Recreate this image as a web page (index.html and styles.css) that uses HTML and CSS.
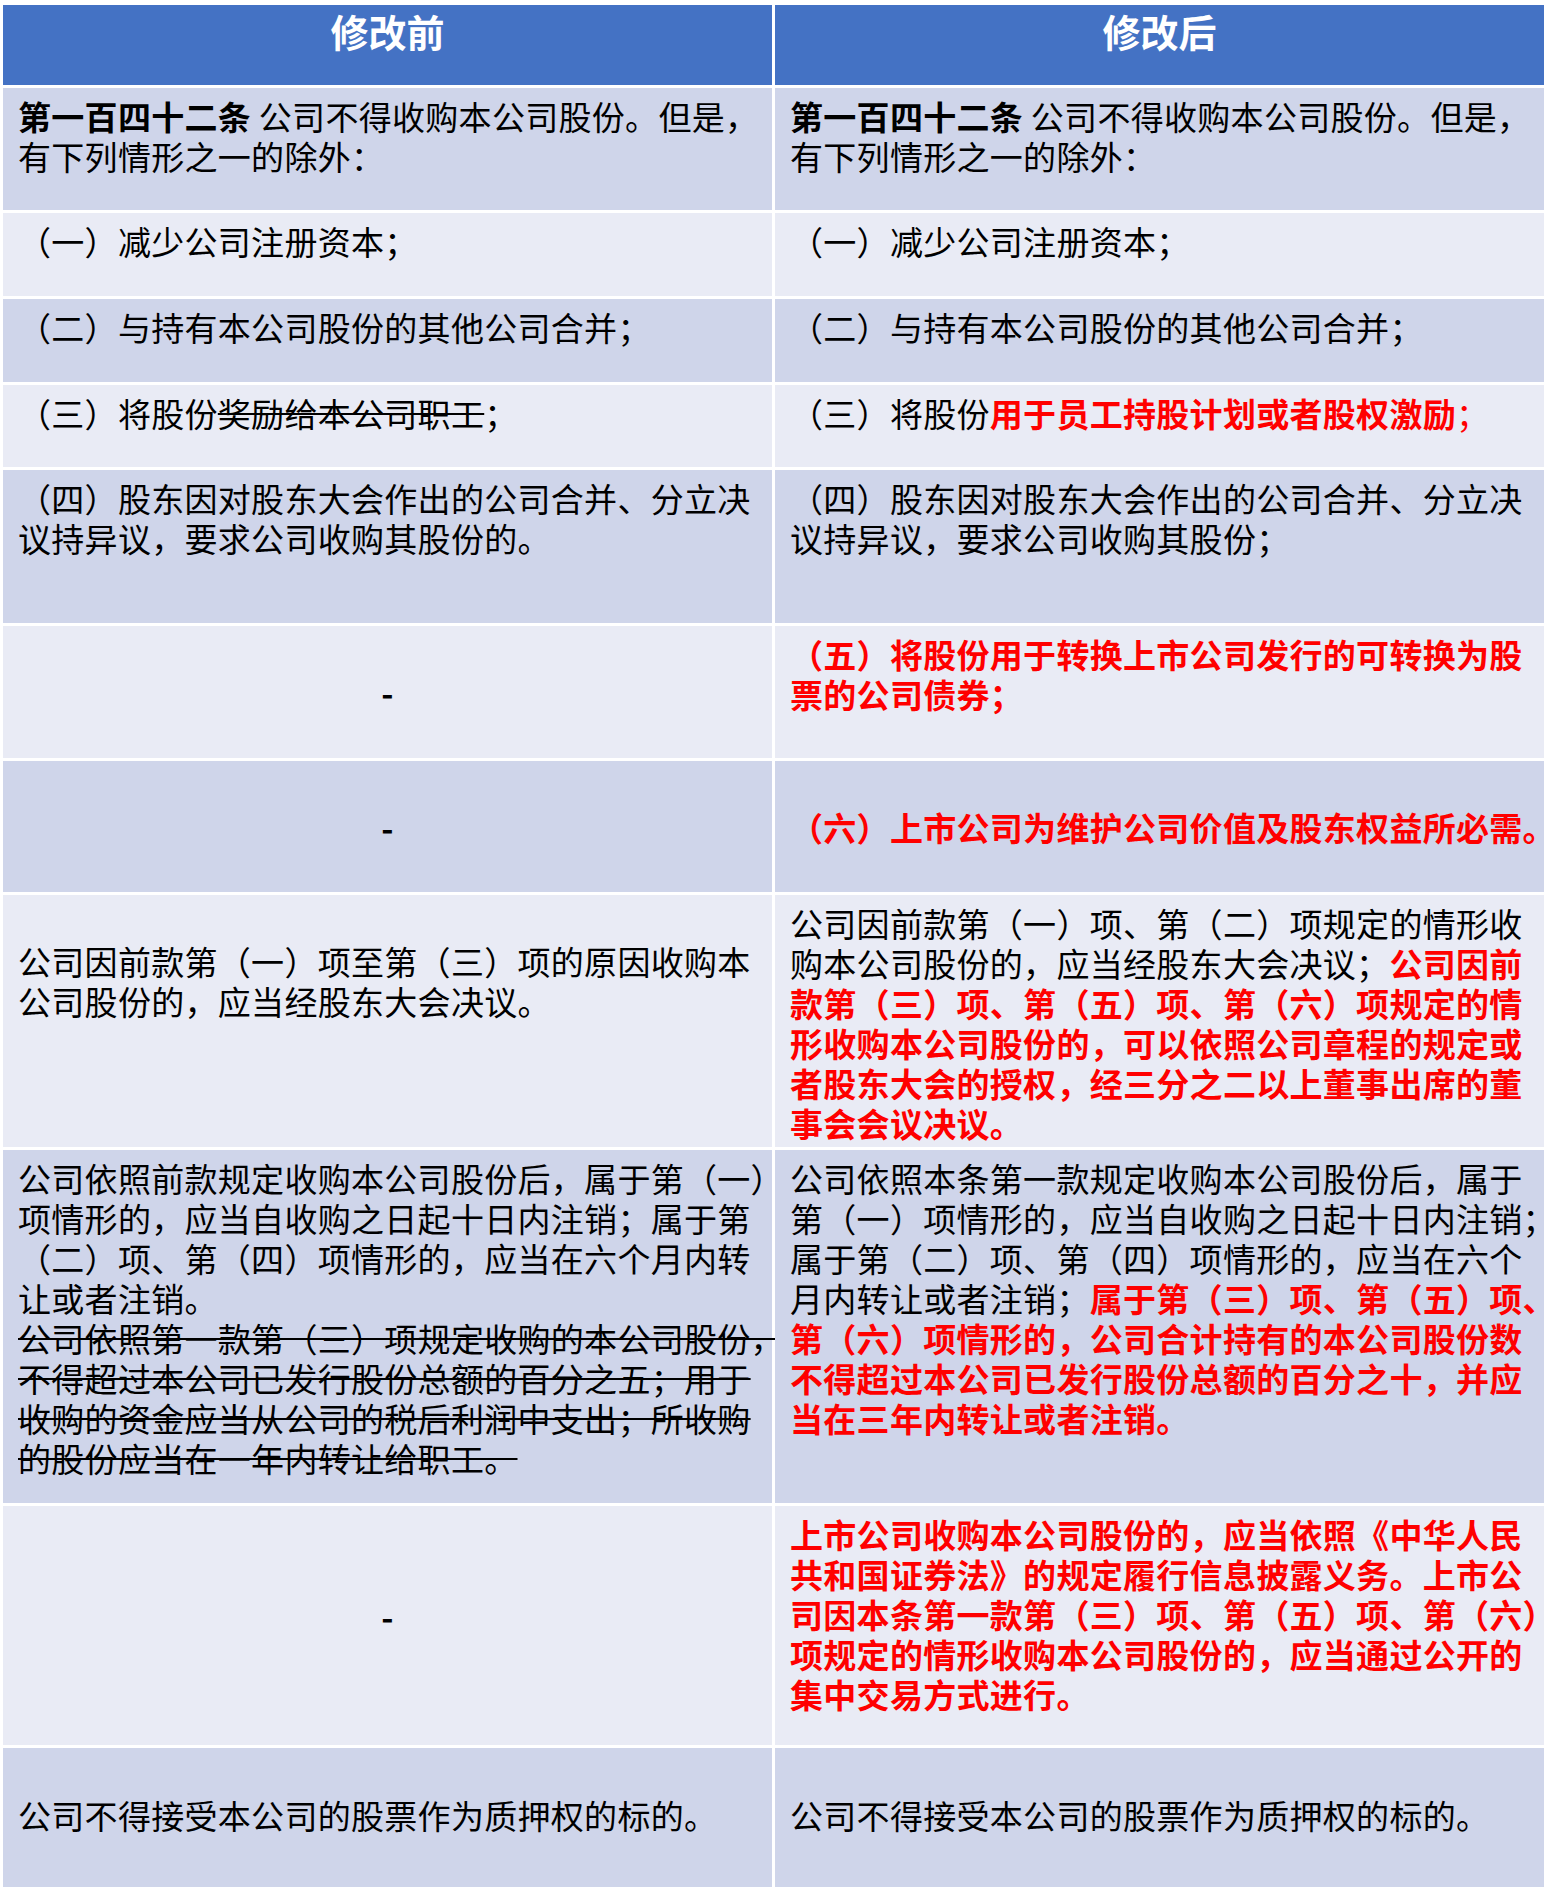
FILE: index.html
```html
<!DOCTYPE html>
<html lang="zh-CN">
<head>
<meta charset="utf-8">
<title>修改前后对照</title>
<link rel="stylesheet" href="styles.css">
</head>
<body>
<div class="table">
  <div class="cell head">修改前</div>
  <div class="cell head">修改后</div>

  <div class="cell band1"><b>第一百四十二条</b> 公司不得收购本公司股份。但是，<br>有下列情形之一的除外：</div>
  <div class="cell band1"><b>第一百四十二条</b> 公司不得收购本公司股份。但是，<br>有下列情形之一的除外：</div>

  <div class="cell band2">（一）减少公司注册资本；</div>
  <div class="cell band2">（一）减少公司注册资本；</div>

  <div class="cell band1">（二）与持有本公司股份的其他公司合并；</div>
  <div class="cell band1">（二）与持有本公司股份的其他公司合并；</div>

  <div class="cell band2">（三）将股份<s>奖励给本公司职工</s>；</div>
  <div class="cell band2">（三）将股份<span class="red">用于员工持股计划或者股权激励</span><span class="red-thin">；</span></div>

  <div class="cell band1">（四）股东因对股东大会作出的公司合并、分立决<br>议持异议，要求公司收购其股份的。</div>
  <div class="cell band1">（四）股东因对股东大会作出的公司合并、分立决<br>议持异议，要求公司收购其股份；</div>

  <div class="cell band2 dash">-</div>
  <div class="cell band2"><span class="red">（五）将股份用于转换上市公司发行的可转换为股<br>票的公司债券；</span></div>

  <div class="cell band1 dash">-</div>
  <div class="cell band1 mid"><span class="red">（六）上市公司为维护公司价值及股东权益所必需。</span></div>

  <div class="cell band2 low">公司因前款第（一）项至第（三）项的原因收购本<br>公司股份的，应当经股东大会决议。</div>
  <div class="cell band2">公司因前款第（一）项、第（二）项规定的情形收<br>购本公司股份的，应当经股东大会决议；<span class="red">公司因前<br>款第（三）项、第（五）项、第（六）项规定的情<br>形收购本公司股份的，可以依照公司章程的规定或<br>者股东大会的授权，经三分之二以上董事出席的董<br>事会会议决议。</span></div>

  <div class="cell band1">公司依照前款规定收购本公司股份后，属于第（一）<br>项情形的，应当自收购之日起十日内注销；属于第<br>（二）项、第（四）项情形的，应当在六个月内转<br>让或者注销。<br><s>公司依照第一款第（三）项规定收购的本公司股份，</s><br><s>不得超过本公司已发行股份总额的百分之五；用于</s><br><s>收购的资金应当从公司的税后利润中支出；所收购</s><br><s>的股份应当在一年内转让给职工。</s></div>
  <div class="cell band1">公司依照本条第一款规定收购本公司股份后，属于<br>第（一）项情形的，应当自收购之日起十日内注销；<br>属于第（二）项、第（四）项情形的，应当在六个<br>月内转让或者注销；<span class="red">属于第（三）项、第（五）项、<br>第（六）项情形的，公司合计持有的本公司股份数<br>不得超过本公司已发行股份总额的百分之十，并应<br>当在三年内转让或者注销。</span></div>

  <div class="cell band2 dash dash-up">-</div>
  <div class="cell band2"><span class="red">上市公司收购本公司股份的，应当依照《中华人民<br>共和国证券法》的规定履行信息披露义务。上市公<br>司因本条第一款第（三）项、第（五）项、第（六）<br>项规定的情形收购本公司股份的，应当通过公开的<br>集中交易方式进行。</span></div>

  <div class="cell band1 mid last">公司不得接受本公司的股票作为质押权的标的。</div>
  <div class="cell band1 mid last">公司不得接受本公司的股票作为质押权的标的。</div>
</div>
</body>
</html>
```
FILE: styles.css
```css
html, body {
  margin: 0;
  padding: 0;
  background: #ffffff;
}

body {
  font-family: "Noto Sans CJK SC", "Noto Sans", sans-serif;
  color: #000000;
}

.table {
  display: grid;
  grid-template-columns: 769px 769px;
  grid-template-rows: 80px 122px 83px 83px 82px 153px 132px 131px 252px 353px 239px 139px;
  gap: 3px;
  padding: 5px 6px 5px 3px;
  width: 1541px;
  background: #ffffff;
}

.cell {
  box-sizing: border-box;
  padding: 8px 15px;
  font-size: 33px;
  letter-spacing: 0.3px;
  line-height: 40px;
  white-space: nowrap;
  overflow: visible;
}

.head {
  background: #4472c4;
  color: #ffffff;
  font-weight: bold;
  font-size: 38px;
  letter-spacing: 0;
  line-height: 44px;
  text-align: center;
  padding-top: 4px;
}

.band1 {
  background: #cfd5ea;
}

.band2 {
  background: #e9ebf5;
}

.cell b {
  font-weight: bold;
}

.red {
  color: #ff0000;
  font-weight: bold;
}

.red-thin {
  color: #ff0000;
}

.cell s {
  text-decoration: line-through;
  text-decoration-thickness: 2px;
}

.dash {
  display: flex;
  align-items: center;
  justify-content: center;
  font-weight: bold;
}

.dash-up {
  padding-bottom: 28px;
}

.mid {
  display: flex;
  flex-direction: column;
  justify-content: center;
}

.last {
  padding-bottom: 14px;
}

.low {
  padding-top: 46px;
}
```
